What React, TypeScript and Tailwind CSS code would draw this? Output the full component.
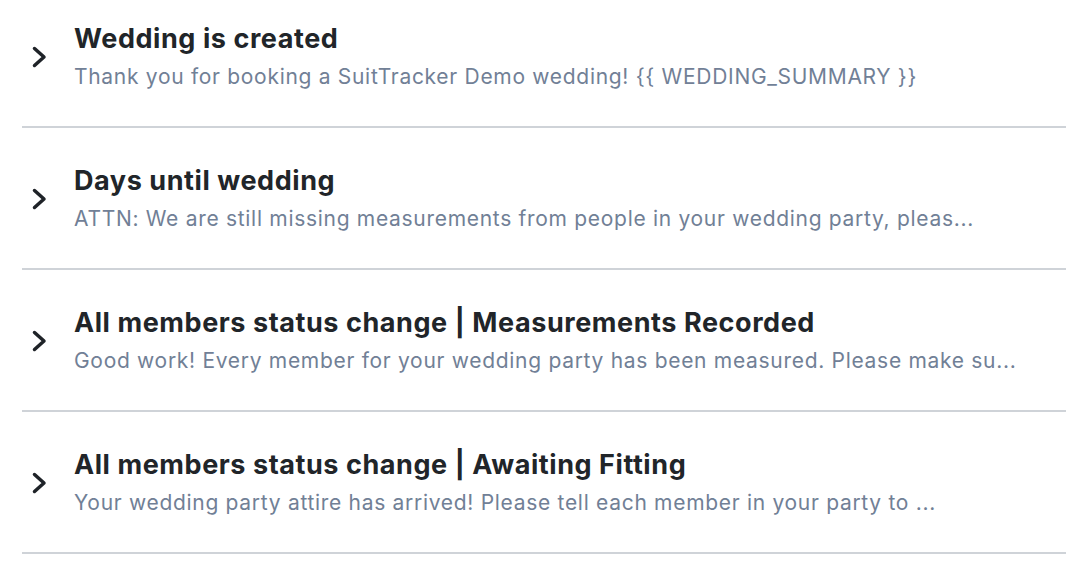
import React from "react";

const items = [
  {
    title: "Wedding is created",
    body: "Thank you for booking a SuitTracker Demo wedding! {{ WEDDING_SUMMARY }}",
  },
  {
    title: "Days until wedding",
    body: "ATTN: We are still missing measurements from people in your wedding party, pleas...",
  },
  {
    title: "All members status change | Measurements Recorded",
    body: "Good work! Every member for your wedding party has been measured. Please make su...",
  },
  {
    title: "All members status change | Awaiting Fitting",
    body: "Your wedding party attire has arrived! Please tell each member in your party to ...",
  },
];

function Chevron() {
  return (
    <svg width="20" height="26" viewBox="0 0 20 26" fill="none">
      <polyline
        points="4.5,4.5 14,13 4.5,21.5"
        stroke="#1f2328"
        strokeWidth="3.5"
        strokeLinecap="round"
        strokeLinejoin="round"
      />
    </svg>
  );
}

export default function App() {
  return (
    <div
      className="w-[1066px] h-[566px] overflow-hidden bg-white pl-[22px]"
      style={{ fontFamily: "Inter, 'Noto Sans', sans-serif" }}
    >
      {items.map((it) => (
        <div
          key={it.title}
          className="flex items-center border-b-2 border-[#cfd3d8] pt-[37px] pb-[35px] first:pt-[23px]"
        >
          <div className="w-[52px] shrink-0 pl-[8px] flex items-center">
            <Chevron />
          </div>
          <div className="flex flex-col gap-[8px] min-w-0">
            <div className="text-[27px] leading-[32px] font-bold tracking-[0.57px] text-[#212529] whitespace-nowrap">
              {it.title}
            </div>
            <div className="text-[21px] leading-[28px] tracking-[0.7px] text-[#718096] whitespace-nowrap">
              {it.body}
            </div>
          </div>
        </div>
      ))}
    </div>
  );
}
